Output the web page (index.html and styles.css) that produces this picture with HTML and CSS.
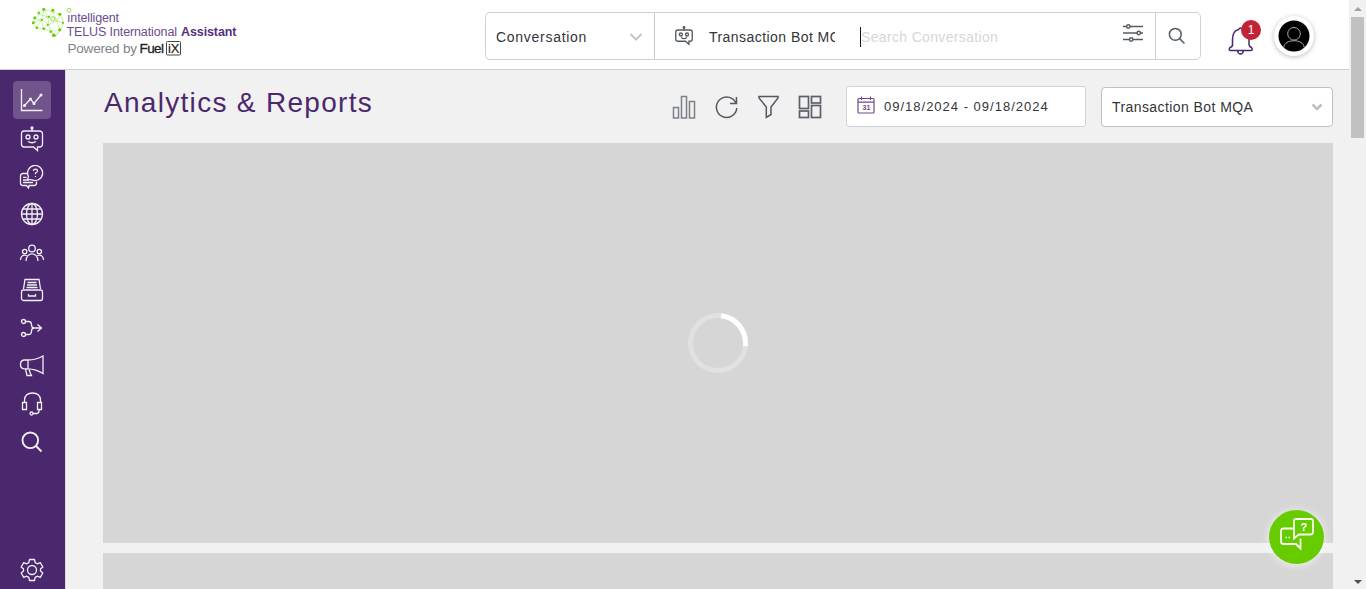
FILE: index.html
```html
<!DOCTYPE html>
<html lang="en">
<head>
<meta charset="utf-8">
<title>Analytics &amp; Reports</title>
<link rel="stylesheet" href="styles.css">
</head>
<body>
<div class="window">
<div class="app">
  <header class="topbar">
    <svg class="logo" width="216" height="60" viewBox="24 0 216 60">
      <g transform="translate(.8 .8)">
      <g class="brain-lines">
        <path d="M34 18L43 9L52 11L60 14L63 22L59 30L54 36L50 30L42 28L35 27L32 22Z"/>
        <path d="M34 18L41 19L43 9L47 16L52 11L56 20L60 14M41 19L47 16L56 20L63 22M32 22L41 19L42 28L48 24L56 20L59 30M48 24L50 30L59 30M41 19L48 24L47 16M35 27L41 19M36 13L47 16M54 36L59 30"/>
      </g>
      <g class="brain-dots">
        <circle cx="34" cy="17" r="1.500"/><circle cx="38" cy="12" r="1.200"/><circle cx="43" cy="8.500" r="1.500"/><circle cx="52" cy="9.500" r="1.500"/><circle cx="59" cy="13.500" r="1.500"/><circle cx="41" cy="19" r="1.100"/><circle cx="48" cy="16" r="1.100"/><circle cx="32.500" cy="22" r="1.500"/><circle cx="36" cy="27" r="1.300"/><circle cx="43" cy="28" r="1.300"/><circle cx="47" cy="24" r="1.100"/><circle cx="50" cy="31" r="1.300"/><circle cx="53" cy="34.500" r="1.800"/><circle cx="59" cy="29" r="1.500"/><circle cx="62" cy="22" r="1.100"/>
      </g>
      <circle class="brain-ring" cx="52" cy="18" r="2.200"/>
      </g>
      <circle class="brain-ring" cx="69" cy="10.300" r="2"/>
      <text class="logo-main" x="67" y="21.500" textLength="52">ıntelligent</text>
      <text class="logo-main" x="66.500" y="36" textLength="110.500">TELUS International</text>
      <text class="logo-bold" x="181" y="36" textLength="55.500">Assistant</text>
      <text class="logo-gray" x="67.500" y="53" textLength="69.500">Powered by</text>
      <text class="logo-fuel" x="139.500" y="53" textLength="24.500">Fuel</text>
      <rect class="logo-box" x="166.500" y="41.500" width="14" height="13.500" rx="1"/>
      <text class="logo-ix" x="168" y="53" textLength="11.500">iX</text>
    </svg>
    <div class="search">
      <div class="search-type"><span>Conversation</span>
        <svg class="chevron" width="14" height="10" viewBox="0 0 14 10"><path d="M1.500 2L7 7.500L12.500 2"/></svg>
      </div>
      <div class="search-body">
        <svg class="icon gray bot" width="18" height="20" viewBox="0 0 24 26"><path d="M4 5H20Q23 5 23 8V17Q23 20 20 20H18.500V24L14 20H4Q1 20 1 17V8Q1 5 4 5ZM12 1.500V5M8 15Q12 18 16 15"/><circle cx="12" cy="1.500" r="1"/><circle cx="7.800" cy="11" r="2"/><circle cx="16" cy="11" r="2"/></svg>
        <span class="search-bot">Transaction Bot MQA</span>
        <span class="search-input">Search Conversation</span>
        <svg class="icon gray sliders" width="22" height="20" viewBox="0 0 22 20"><path d="M1 3.500H4.500M8 3.500H21M1 10H15M18.500 10H21M1 16.500H7.500M11 16.500H21"/><circle cx="6.300" cy="3.500" r="1.700"/><circle cx="16.800" cy="10" r="1.700"/><circle cx="9.200" cy="16.500" r="1.700"/></svg>
      </div>
      <div class="search-go"><svg class="icon gray" width="18" height="18" viewBox="0 0 18 18"><circle cx="7.300" cy="7.300" r="5.900"/><path d="M11.600 11.600L16.500 16.500"/></svg></div>
    </div>
    <div class="bell">
      <svg width="28" height="30" viewBox="0 0 28 30"><path d="M4.500 20V13.500Q4.500 5 10.500 3.500Q12.500 .5 14.500 3.500Q21 5 21 13.500V18.500Q21 20.500 23.500 21.500Q25.500 24.500 22.500 24.500H3Q0 24.500 2 21.500Q4.500 21 4.500 18.500M9.500 24.500Q10 28 12.500 28Q15 28 15.500 24.500"/></svg>
      <span class="badge">1</span>
    </div>
    <div class="avatar"><svg width="32" height="32" viewBox="0 0 32 32"><circle cx="16" cy="16" r="15.500"/><path d="M16 7.500A6.300 6.300 0 1 1 16 20.100A6.300 6.300 0 1 1 16 7.500M5.800 27.500C6 18.500 26 18.500 26.200 27.500"/></svg></div>
  </header>
  <div class="body">
    <nav class="sidebar">
      <a class="nav active"><svg width="24" height="24" viewBox="0 0 24 24"><path d="M1.500 1V22.500H22.500M4.500 17.500L10.500 11L14 15.500L21 7"/><g class="solid"><circle cx="4.500" cy="17.500" r=".9"/><circle cx="10.500" cy="11" r=".9"/><circle cx="14" cy="15.500" r=".9"/><circle cx="21" cy="7" r=".9"/></g></svg></a>
      <a class="nav low"><svg width="24" height="26" viewBox="0 0 24 26"><path d="M4 5H19Q22.500 5 22.500 8V18Q22.500 21 19 21H17.500V24.500L13.500 21H4Q1.500 21 1.500 18V8Q1.500 5 4 5ZM12 2V5M8 15.500Q12 18 16 15.500"/><circle cx="12" cy="2" r="1"/><circle cx="8" cy="11" r="2"/><circle cx="16" cy="11" r="2"/></svg></a>
      <a class="nav low"><svg width="26" height="24" viewBox="0 0 26 24"><path d="M8.500 14.500L9.500 11.500A7.500 7.500 0 1 1 13 14.800ZM8 8.500H4Q1.500 8.500 1.500 11V18Q1.500 20.500 4 20.500H7.500L9.500 23L10 20.500H15Q17.500 20.500 17.500 18V16.500M4 12.300H7.500M4 15H10M4 17.500H14M14.500 6Q14.500 4.200 16.500 4.200Q18.500 4.200 18.500 6Q18.500 7 16.500 8V9.300M16.500 11V12"/></svg></a>
      <a class="nav"><svg width="24" height="24" viewBox="0 0 24 24"><circle cx="12" cy="12" r="10.500"/><ellipse cx="12" cy="12" rx="5.500" ry="10.500"/><path d="M12 1.500V22.500M1.500 12H22.500M3 7H21M3 17H21"/></svg></a>
      <a class="nav low"><svg width="26" height="24" viewBox="0 0 26 24"><circle cx="13" cy="7.500" r="3.300"/><circle cx="5.700" cy="10.500" r="2.200"/><circle cx="20.300" cy="10.500" r="2.200"/><path d="M7 20C7 10.500 19 10.500 19 20M1.500 19C1.500 14.500 4.500 13.500 7.800 14.500M24.500 19C24.500 14.500 21.500 13.500 18.200 14.500"/></svg></a>
      <a class="nav"><svg width="24" height="24" viewBox="0 0 24 24"><path d="M3.500 11L5 1.500H19L20.500 11M7.500 4.500H16.500M7 7H17M6.500 9.500H17.500M8.500 16V18H15.500V16"/><rect x="1.500" y="12" width="21" height="10.500" rx="2"/></svg></a>
      <a class="nav"><svg width="24" height="24" viewBox="0 0 24 24"><circle cx="3.500" cy="5.500" r="2"/><circle cx="3.500" cy="18.500" r="2"/><path d="M5.500 5.500H8.500Q11.500 5.500 11.500 9Q11.500 12 14.500 12Q11.500 12 11.500 15Q11.500 18.500 8.500 18.500H5.500M14 12H21M17.500 8.500L21.500 12L17.500 15.500"/></svg></a>
      <a class="nav"><svg width="26" height="24" viewBox="0 0 26 24"><path d="M24 2V19.500Q17 15 9 14.800H5Q1.500 14.500 1.500 10.500Q1.500 6.500 5 6H9Q17 6 24 2ZM9 6V14.800M6.500 15L8 21.500H12.500L11 18.500L10 14.800"/></svg></a>
      <a class="nav"><svg width="24" height="26" viewBox="0 0 24 26"><path d="M4.500 11.500V9Q5 2 12.500 2Q20 2 20.500 9V11.500M19 18.500V20Q19 22.500 16.500 22.500H13M2.500 11.500H6.500V18.500H2.500ZM17.500 11.500H21.500V18.500H17.500Z"/><circle cx="11.500" cy="22.500" r="1.500"/></svg></a>
      <a class="nav thick"><svg width="24" height="24" viewBox="0 0 24 24"><circle cx="10.300" cy="10.300" r="7.800"/><path d="M16 16L21.500 21.500"/></svg></a>
      <a class="nav settings"><svg width="24" height="24" viewBox="0 0 24 24"><path stroke-linejoin="round" d="M9.500 1.500H14.500L15.200 4.600L17.300 5.800L20.300 4.700L22.800 9L20.500 11V13L22.800 15L20.300 19.300L17.300 18.200L15.200 19.400L14.500 22.500H9.500L8.800 19.400L6.700 18.200L3.700 19.300L1.200 15L3.500 13V11L1.200 9L3.700 4.700L6.700 5.800L8.800 4.600Z"/><circle cx="12" cy="12" r="4.500"/></svg></a>
    </nav>
    <main class="main">
      <div class="heading">
        <h1>Analytics &amp; Reports</h1>
        <div class="tools">
          <svg class="icon bars" width="24" height="25" viewBox="0 0 24 25"><rect x="1.500" y="12.500" width="5" height="10.500"/><rect x="9.500" y="1.500" width="5" height="21.500"/><rect x="17.500" y="6.500" width="5" height="16.500"/></svg>
          <svg class="icon" width="24" height="24" viewBox="0 0 24 24"><path d="M22.300 9A10.200 10.200 0 1 0 22.800 13M22.500 2V8.500H16"/></svg>
          <svg class="icon" width="24" height="24" viewBox="0 0 24 24"><path d="M3 1.500H22V3L15 12V19.500L10.300 22.500V12L3 3Z"/></svg>
          <svg class="icon grid" width="24" height="24" viewBox="0 0 24 24"><rect x="1.500" y="1.500" width="9" height="12"/><rect x="13.500" y="1.500" width="9" height="6.500"/><rect x="1.500" y="16" width="9" height="6.500"/><rect x="13.500" y="10.500" width="9" height="12"/></svg>
        </div>
        <div class="date">
          <svg class="calendar" width="18" height="18" viewBox="0 0 18 18"><rect x="1" y="2.500" width="16" height="14.500" rx="1"/><path d="M1 6.200H17M4.500 .5V4M13.500 .5V4"/><text x="5.500" y="14">31</text></svg>
          <span>09/18/2024 - 09/18/2024</span>
        </div>
        <div class="select"><span>Transaction Bot MQA</span><svg class="chevron heavy" width="12" height="10" viewBox="0 0 12 10"><path d="M1.500 2.500L6 7L10.500 2.500"/></svg></div>
      </div>
      <section class="panel"><svg class="spinner" width="60" height="60" viewBox="0 0 60 60"><circle cx="30" cy="30" r="27.500"/><path d="M33 2.700A27.500 27.500 0 0 1 57.300 33"/></svg></section>
      <section class="panel"></section>
    </main>
  </div>
</div>
<div class="scrollbar"><i class="arrow up"></i><i class="thumb"></i><i class="arrow down"></i></div>
<div class="chat"><svg width="36" height="34" viewBox="0 0 36 34"><path d="M17 2H32Q34 2 34 4V15Q34 17.500 31.500 17.500H20L15 21.500V4Q15 2 17 2ZM14.500 11.500H4.500Q2 11.500 2 14V24.500Q2 27 4.500 27H17L21.500 31.500V21.500"/><path class="dots" d="M6.500 20.500H8M9.500 20.500H11"/><text x="21.500" y="14">?</text></svg></div>
</div>
</body>
</html>
```
FILE: styles.css
```css
* { box-sizing: border-box; }
body { margin: 0; font: 14px/20px "Liberation Sans", Arial, sans-serif; color: #333537; }
svg { display: block; flex: none; fill: none; }
.window { display: flex; height: 589px; overflow: hidden; position: relative; background: #f1f1f1; }
.app { width: 1349px; display: flex; flex-direction: column; }
.topbar { height: 70px; flex: none; display: flex; background: #fff; border-bottom: 1px solid #d0d0d1; padding-left: 24px; }
.brain-lines { stroke: #a6e36c; stroke-width: .6; }
.brain-dots { fill: #66cc00; }
.brain-ring { fill: #fff; stroke: #7cd628; stroke-width: .8; }
.logo-main { font-size: 12.5px; fill: #6b4c90; }
.logo-bold { font-size: 12.5px; font-weight: 700; fill: #55317f; }
.logo-gray { font-size: 13.5px; fill: #808389; }
.logo-fuel { font-size: 13.5px; fill: #222; stroke: #222; stroke-width: .3; }
.logo-ix { font-size: 13px; fill: #222; stroke: #222; stroke-width: .2; }
.logo-box { stroke: #444; }
.search { display: flex; width: 716px; height: 48px; margin: 12px 0 0 245px; border: 1px solid #d0d0d0; border-radius: 5px; }
.search-type { width: 169px; border-right: 1px solid #c8c8c8; padding: 2px 11px 0 10px; display: flex; align-items: center; justify-content: space-between; letter-spacing: .72px; }
.search-body { flex: 1; display: flex; align-items: center; padding: 2px 11px 0 20px; }
.search-bot { width: 126px; margin-left: 16px; overflow: hidden; white-space: nowrap; letter-spacing: .45px; }
.search-input { margin-left: 25px; border-left: 1px solid #111; color: #d5d7d7; letter-spacing: .34px; flex: 1; }
.search-go { width: 45px; border-left: 1px solid #d0d0d0; display: flex; align-items: center; justify-content: center; padding-right: 2px; }
.chevron { stroke: #c5c5c5; stroke-width: 2; }
.heavy { stroke-width: 2.5; stroke: #bebebe; }
.icon { stroke: #535963; stroke-width: 1.5; }
.gray { stroke: #555c64; }
.bot { stroke-width: 1.8; margin-bottom: 2px; }
.sliders { margin-bottom: 9px; }
.search-go .icon { margin-bottom: 1px; }
.bell { position: relative; width: 35px; margin-left: 26px; padding: 26px 0 0 1px; }
.bell svg { stroke: #4b286d; stroke-width: 1.5; }
.badge { position: absolute; left: 14px; top: 20px; width: 20px; height: 20px; border-radius: 50%; background: #c12335; color: #fff; font-size: 12px; text-align: center; }
.avatar { width: 40px; height: 40px; margin: 16px 0 0 12px; padding: 4px; border-radius: 50%; background: #fff; box-shadow: 0 1px 5px #0004; }
.avatar circle { fill: #000; }
.avatar path { stroke: #aaa; stroke-width: 1; }
.body { display: flex; flex: 1; min-height: 0; }
.sidebar { width: 66px; background: #4b286d; border-right: 1px solid #dad5df; padding: 11px 0 0 13px; display: flex; flex-direction: column; }
.nav { width: 38px; height: 38px; flex: none; display: flex; align-items: center; justify-content: center; border-radius: 4px; }
.low { padding-top: 1px; }
.nav svg { stroke: #f2eff5; stroke-width: 1.3; }
.solid { fill: #fff; }
.active { background: #71548b; }
.thick svg { stroke-width: 1.9; }
.settings { margin: auto 0 0; }
.main { width: 1283px; padding: 0 16px 0 37px; display: flex; flex-direction: column; }
.heading { height: 73px; flex: none; display: flex; align-items: flex-start; }
h1 { margin: 15px 0 0 1px; width: 568px; font-size: 28px; line-height: 36px; font-weight: 400; color: #4b286d; letter-spacing: 1.3px; }
.tools { display: flex; width: 174px; gap: 18px; padding-top: 25px; }
.bars { stroke: #7d8187; }
.grid { stroke: #5b6068; stroke-width: 1.7; }
.date { width: 240px; height: 41px; margin-top: 16px; border: 1px solid #d0d5dc; border-radius: 3px; background: #fff; display: flex; align-items: center; padding-left: 10px; gap: 9px; font-size: 13px; letter-spacing: 1px; }
.calendar { stroke: #6c4b8b; stroke-width: 1.2; margin-bottom: 3px; }
.calendar text { font: 700 7px "Liberation Sans", sans-serif; letter-spacing: 0; fill: #6c4b8b; stroke: none; }
.select { width: 232px; height: 40px; margin: 17px 0 0 15px; border: 1px solid #c0c0c0; border-radius: 4px; background: #fff; display: flex; align-items: center; justify-content: space-between; padding: 0 9px 0 10px; letter-spacing: .42px; }
.panel { height: 400px; flex: none; margin-bottom: 10px; background: #d6d6d6; display: flex; align-items: center; justify-content: center; }
.spinner { stroke: #e1e1e1; stroke-width: 5; }
.spinner path { stroke: #fff; }
.scrollbar { width: 17px; background: #f1f1f1; display: flex; flex-direction: column; align-items: center; padding: 7px 0 5px; }
.arrow { border: 4px solid transparent; }
.up { border-top: 0; border-bottom-color: #a3a3a3; }
.thumb { width: 13px; height: 121px; margin-top: 6px; background: #c1c1c1; }
.down { margin-top: auto; border-bottom: 0; border-top-color: #505050; }
.chat { position: absolute; left: 1269px; top: 510px; width: 55px; height: 54px; border-radius: 50%; background: #66cc00; box-shadow: 0 1px 8px #fffb; padding: 7px 0 0 10px; }
.chat svg { stroke: #f8fff2; stroke-width: 1.8; }
.chat .dots { stroke-width: 1.5; }
.chat text { font: 700 11px "Liberation Sans", sans-serif; fill: #fff; stroke: none; }
```
